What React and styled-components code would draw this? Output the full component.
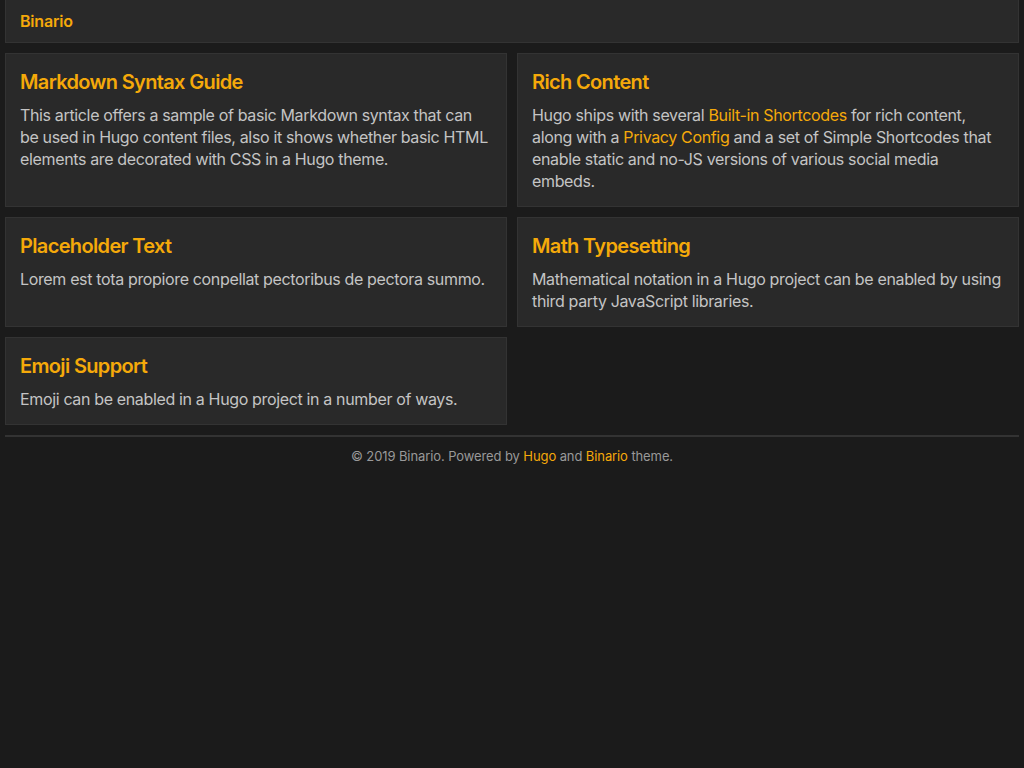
import styled, { createGlobalStyle } from "styled-components";

const GlobalStyle = createGlobalStyle`
  html, body {
    margin: 0;
    padding: 0;
    background: #1b1b1b;
  }
  body {
    font-family: Inter, "Noto Sans", "Liberation Sans", sans-serif;
    color: #c4c4c4;
  }
`;

const Page = styled.div`
  padding: 0 5px;
`;

const Header = styled.header`
  height: 42px;
  display: flex;
  align-items: center;
  padding: 0 14px;
  background: #292929;
  border: 1px solid #333;
  border-top: none;
`;

const Brand = styled.a`
  color: #f5a90a;
  font-weight: 600;
  font-size: 16px;
  letter-spacing: -0.2px;
  text-decoration: none;
`;

const Grid = styled.main`
  display: grid;
  grid-template-columns: 1fr 1fr;
  gap: 10px;
  margin-top: 10px;
`;

const Card = styled.article`
  background: #292929;
  border: 1px solid #333;
  padding: 15px 15px 14px 14px;
`;

const Title = styled.h2`
  margin: 0 0 9px;
  font-size: 20px;
  line-height: 26px;
  font-weight: 600;
  letter-spacing: -0.65px;
  color: #f5a90a;
`;

const Summary = styled.p`
  margin: 0;
  font-size: 16px;
  line-height: 22px;
  letter-spacing: -0.35px;
  color: #c4c4c4;
`;

const Link = styled.a`
  color: #f5a90a;
  text-decoration: none;
`;

const Footer = styled.footer`
  margin-top: 10px;
  border-top: 2px solid #333;
  padding-top: 11px;
  text-align: center;
  font-size: 13px;
  line-height: 16px;
  letter-spacing: -0.1px;
  color: #999;
`;

const posts = [
  {
    title: "Markdown Syntax Guide",
    summary:
      "This article offers a sample of basic Markdown syntax that can be used in Hugo content files, also it shows whether basic HTML elements are decorated with CSS in a Hugo theme.",
  },
  {
    title: "Rich Content",
    summary: (
      <>
        Hugo ships with several <Link href="#">Built-in Shortcodes</Link> for rich content,
        along with a <Link href="#">Privacy Config</Link> and a set of Simple Shortcodes that
        enable static and no-JS versions of various social media embeds.
      </>
    ),
  },
  {
    title: "Placeholder Text",
    summary: "Lorem est tota propiore conpellat pectoribus de pectora summo.",
  },
  {
    title: "Math Typesetting",
    summary:
      "Mathematical notation in a Hugo project can be enabled by using third party JavaScript libraries.",
  },
  {
    title: "Emoji Support",
    summary: "Emoji can be enabled in a Hugo project in a number of ways.",
  },
];

const App = () => {
  return (
    <Page>
      <GlobalStyle />
      <Header>
        <Brand href="#">Binario</Brand>
      </Header>
      <Grid>
        {posts.map((post) => (
          <Card key={post.title}>
            <Title>{post.title}</Title>
            <Summary>{post.summary}</Summary>
          </Card>
        ))}
      </Grid>
      <Footer>
        © 2019 Binario. Powered by <Link href="#">Hugo</Link> and{" "}
        <Link href="#">Binario</Link> theme.
      </Footer>
    </Page>
  );
};

export default App;
